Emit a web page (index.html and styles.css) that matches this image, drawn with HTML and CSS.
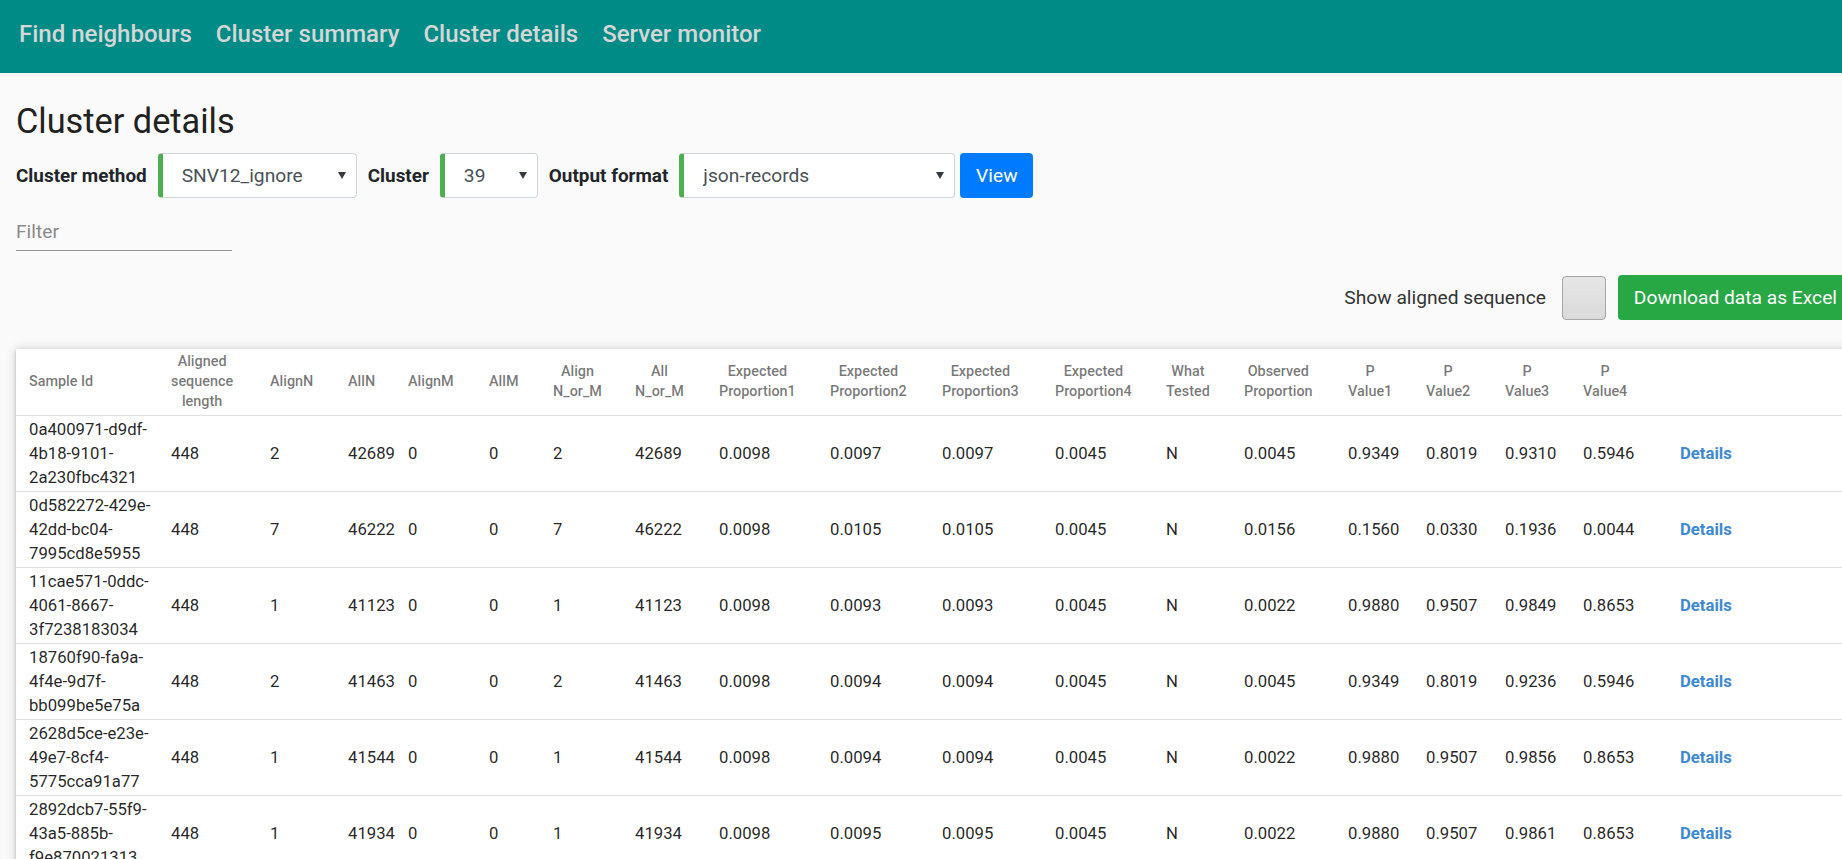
FILE: index.html
```html
<!DOCTYPE html>
<html lang="en">
<head>
<meta charset="utf-8">
<title>Cluster details</title>
<link rel="stylesheet" href="styles.css">
</head>
<body>
<header class="navbar">
  <nav class="nav">
    <a href="#">Find neighbours</a>
    <a href="#">Cluster summary</a>
    <a href="#">Cluster details</a>
    <a href="#">Server monitor</a>
  </nav>
</header>
<main class="page">
  <h1 class="title">Cluster details</h1>
  <form class="controls">
    <label class="ctl-label">Cluster method</label>
    <span class="select-wrap w-method"><select class="select"><option>SNV12_ignore</option></select></span>
    <label class="ctl-label">Cluster</label>
    <span class="select-wrap w-cluster"><select class="select"><option>39</option></select></span>
    <label class="ctl-label">Output format</label>
    <span class="select-wrap w-format"><select class="select"><option>json-records</option></select></span>
    <button type="button" class="btn-view">View</button>
  </form>
  <input class="filter" type="text" placeholder="Filter">
  <div class="toolbar">
    <span class="tool-label">Show aligned sequence</span>
    <input class="check" type="checkbox">
    <button type="button" class="btn-excel">Download data as Excel</button>
  </div>
  <div class="card">
    <table class="grid">
      <colgroup>
        <col class="c1"><col class="c2"><col class="c3"><col class="c4"><col class="c5"><col class="c6"><col class="c7"><col class="c8"><col class="c9"><col class="c10"><col class="c11"><col class="c12"><col class="c13"><col class="c14"><col class="c15"><col class="c16"><col class="c17"><col class="c18"><col class="c19">
      </colgroup>
      <thead>
        <tr>
          <th><span>Sample Id</span></th>
          <th><span>Aligned<br>sequence<br>length</span></th>
          <th><span>AlignN</span></th>
          <th><span>AllN</span></th>
          <th><span>AlignM</span></th>
          <th><span>AllM</span></th>
          <th><span>Align<br>N_or_M</span></th>
          <th><span>All<br>N_or_M</span></th>
          <th><span>Expected<br>Proportion1</span></th>
          <th><span>Expected<br>Proportion2</span></th>
          <th><span>Expected<br>Proportion3</span></th>
          <th><span>Expected<br>Proportion4</span></th>
          <th><span>What<br>Tested</span></th>
          <th><span>Observed<br>Proportion</span></th>
          <th><span>P<br>Value1</span></th>
          <th><span>P<br>Value2</span></th>
          <th><span>P<br>Value3</span></th>
          <th><span>P<br>Value4</span></th>
          <th></th>
        </tr>
      </thead>
      <tbody>
        <tr>
          <td>0a400971-d9df-<br>4b18-9101-<br>2a230fbc4321</td>
          <td>448</td><td>2</td><td>42689</td><td>0</td><td>0</td><td>2</td><td>42689</td>
          <td>0.0098</td><td>0.0097</td><td>0.0097</td><td>0.0045</td><td>N</td><td>0.0045</td>
          <td>0.9349</td><td>0.8019</td><td>0.9310</td><td>0.5946</td>
          <td><a class="details" href="#">Details</a></td>
        </tr>
        <tr>
          <td>0d582272-429e-<br>42dd-bc04-<br>7995cd8e5955</td>
          <td>448</td><td>7</td><td>46222</td><td>0</td><td>0</td><td>7</td><td>46222</td>
          <td>0.0098</td><td>0.0105</td><td>0.0105</td><td>0.0045</td><td>N</td><td>0.0156</td>
          <td>0.1560</td><td>0.0330</td><td>0.1936</td><td>0.0044</td>
          <td><a class="details" href="#">Details</a></td>
        </tr>
        <tr>
          <td>11cae571-0ddc-<br>4061-8667-<br>3f7238183034</td>
          <td>448</td><td>1</td><td>41123</td><td>0</td><td>0</td><td>1</td><td>41123</td>
          <td>0.0098</td><td>0.0093</td><td>0.0093</td><td>0.0045</td><td>N</td><td>0.0022</td>
          <td>0.9880</td><td>0.9507</td><td>0.9849</td><td>0.8653</td>
          <td><a class="details" href="#">Details</a></td>
        </tr>
        <tr>
          <td>18760f90-fa9a-<br>4f4e-9d7f-<br>bb099be5e75a</td>
          <td>448</td><td>2</td><td>41463</td><td>0</td><td>0</td><td>2</td><td>41463</td>
          <td>0.0098</td><td>0.0094</td><td>0.0094</td><td>0.0045</td><td>N</td><td>0.0045</td>
          <td>0.9349</td><td>0.8019</td><td>0.9236</td><td>0.5946</td>
          <td><a class="details" href="#">Details</a></td>
        </tr>
        <tr>
          <td>2628d5ce-e23e-<br>49e7-8cf4-<br>5775cca91a77</td>
          <td>448</td><td>1</td><td>41544</td><td>0</td><td>0</td><td>1</td><td>41544</td>
          <td>0.0098</td><td>0.0094</td><td>0.0094</td><td>0.0045</td><td>N</td><td>0.0022</td>
          <td>0.9880</td><td>0.9507</td><td>0.9856</td><td>0.8653</td>
          <td><a class="details" href="#">Details</a></td>
        </tr>
        <tr>
          <td>2892dcb7-55f9-<br>43a5-885b-<br>f9e870021313</td>
          <td>448</td><td>1</td><td>41934</td><td>0</td><td>0</td><td>1</td><td>41934</td>
          <td>0.0098</td><td>0.0095</td><td>0.0095</td><td>0.0045</td><td>N</td><td>0.0022</td>
          <td>0.9880</td><td>0.9507</td><td>0.9861</td><td>0.8653</td>
          <td><a class="details" href="#">Details</a></td>
        </tr>
      </tbody>
    </table>
  </div>
</main>
</body>
</html>
```
FILE: styles.css
```css
html {
  scrollbar-width: none;
}
body {
  margin: 0;
  background: #fafafa;
  font-family: Roboto, "Noto Sans", "Liberation Sans", sans-serif;
  color: #212121;
}

/* top navigation */
.navbar {
  background: #008b87;
  height: 73px;
  box-sizing: border-box;
  padding: 0 0 4px 19px;
  display: flex;
  align-items: center;
}
.nav {
  display: flex;
  gap: 24px;
}
.nav a {
  color: #d6d6d6;
  font-size: 24px;
  font-weight: 500;
  line-height: 25px;
  text-decoration: none;
}

/* page */
.page {
  width: max-content;
  padding-left: 16px;
}
.title {
  margin: 28px 0 0 0;
  font-size: 34.3px;
  font-weight: 400;
  line-height: 40px;
  color: #212121;
}

/* controls row */
.controls {
  margin-top: 12px;
  display: flex;
  align-items: center;
  height: 45px;
}
.ctl-label {
  font-size: 18.9px;
  font-weight: 700;
  color: #212529;
  margin-right: 11px;
}
.select-wrap {
  position: relative;
  display: block;
  height: 45px;
  margin-right: 11px;
}
.select-wrap::after {
  content: "";
  position: absolute;
  right: 11px;
  top: 19px;
  border-left: 4px solid transparent;
  border-right: 4px solid transparent;
  border-top: 7px solid #343a40;
  pointer-events: none;
}
.w-method { width: 199px; }
.w-cluster { width: 98px; }
.w-format { width: 276px; margin-right: 5px; }
.select {
  appearance: none;
  -webkit-appearance: none;
  width: 100%;
  height: 100%;
  box-sizing: border-box;
  border: 1px solid #ced4da;
  border-left: 5px solid #4caf50;
  border-radius: 4px;
  background: #fff;
  padding: 0 28px 0 19px;
  font-family: inherit;
  font-size: 19.2px;
  color: #495057;
}
.btn-view {
  height: 45px;
  width: 73px;
  border: none;
  border-radius: 4px;
  background: #007bff;
  color: #fff;
  font-family: inherit;
  font-size: 19.2px;
  padding: 0;
}

/* filter */
.filter {
  display: block;
  margin-top: 22px;
  width: 216px;
  box-sizing: border-box;
  border: none;
  border-bottom: 1px solid #949494;
  background: transparent;
  padding: 0 0 6px 0;
  font-family: inherit;
  font-size: 19.2px;
  line-height: 24px;
  color: #212121;
  outline: none;
}
.filter::placeholder {
  color: #8a8a8a;
}

/* toolbar */
.toolbar {
  margin-top: 24px;
  display: flex;
  justify-content: flex-end;
  align-items: center;
  height: 45px;
  padding-right: 19px;
}
.tool-label {
  font-size: 19.2px;
  color: #333;
  margin-right: 16px;
}
.check {
  appearance: none;
  -webkit-appearance: none;
  margin: 0 12px 0 0;
  width: 44px;
  height: 44px;
  box-sizing: border-box;
  border: 1px solid #a6a6a6;
  border-radius: 4px;
  background: linear-gradient(#e6e6e6, #dadada);
}
.btn-excel {
  height: 45px;
  border: none;
  border-radius: 4px;
  background: #28a745;
  color: #fff;
  font-family: inherit;
  font-size: 19.2px;
  padding: 0 16px;
  white-space: nowrap;
}

/* data card */
.card {
  margin-top: 29px;
  background: #fff;
  width: max-content;
  box-shadow: 0 2px 2px 0 rgba(0, 0, 0, 0.14), 0 0 10px 1px rgba(0, 0, 0, 0.12), 0 1px 5px 0 rgba(0, 0, 0, 0.12);
}
.grid {
  table-layout: fixed;
  border-collapse: collapse;
  width: 1856px;
}
.c1 { width: 155px; }
.c2 { width: 99px; }
.c3 { width: 78px; }
.c4 { width: 60px; }
.c5 { width: 81px; }
.c6 { width: 64px; }
.c7 { width: 82px; }
.c8 { width: 84px; }
.c9 { width: 111px; }
.c10 { width: 112px; }
.c11 { width: 113px; }
.c12 { width: 111px; }
.c13 { width: 78px; }
.c14 { width: 104px; }
.c15 { width: 78px; }
.c16 { width: 79px; }
.c17 { width: 78px; }
.c18 { width: 97px; }
.c19 { width: 192px; }

.grid th {
  padding: 3px 0;
  text-align: left;
  vertical-align: middle;
  font-size: 14.4px;
  font-weight: 500;
  line-height: 20px;
  color: rgba(0, 0, 0, 0.54);
  border-bottom: 1px solid #e0e0e0;
  white-space: nowrap;
}
.grid th span {
  display: inline-block;
  text-align: center;
}
.grid td {
  padding: 1.5px 0;
  vertical-align: middle;
  font-size: 16.7px;
  line-height: 24px;
  color: rgba(0, 0, 0, 0.87);
  border-bottom: 1px solid #e0e0e0;
  white-space: nowrap;
}
.grid th:first-child,
.grid td:first-child {
  padding-left: 13px;
}
.details {
  color: #3f88d2;
  font-weight: 700;
  text-decoration: none;
}
```
